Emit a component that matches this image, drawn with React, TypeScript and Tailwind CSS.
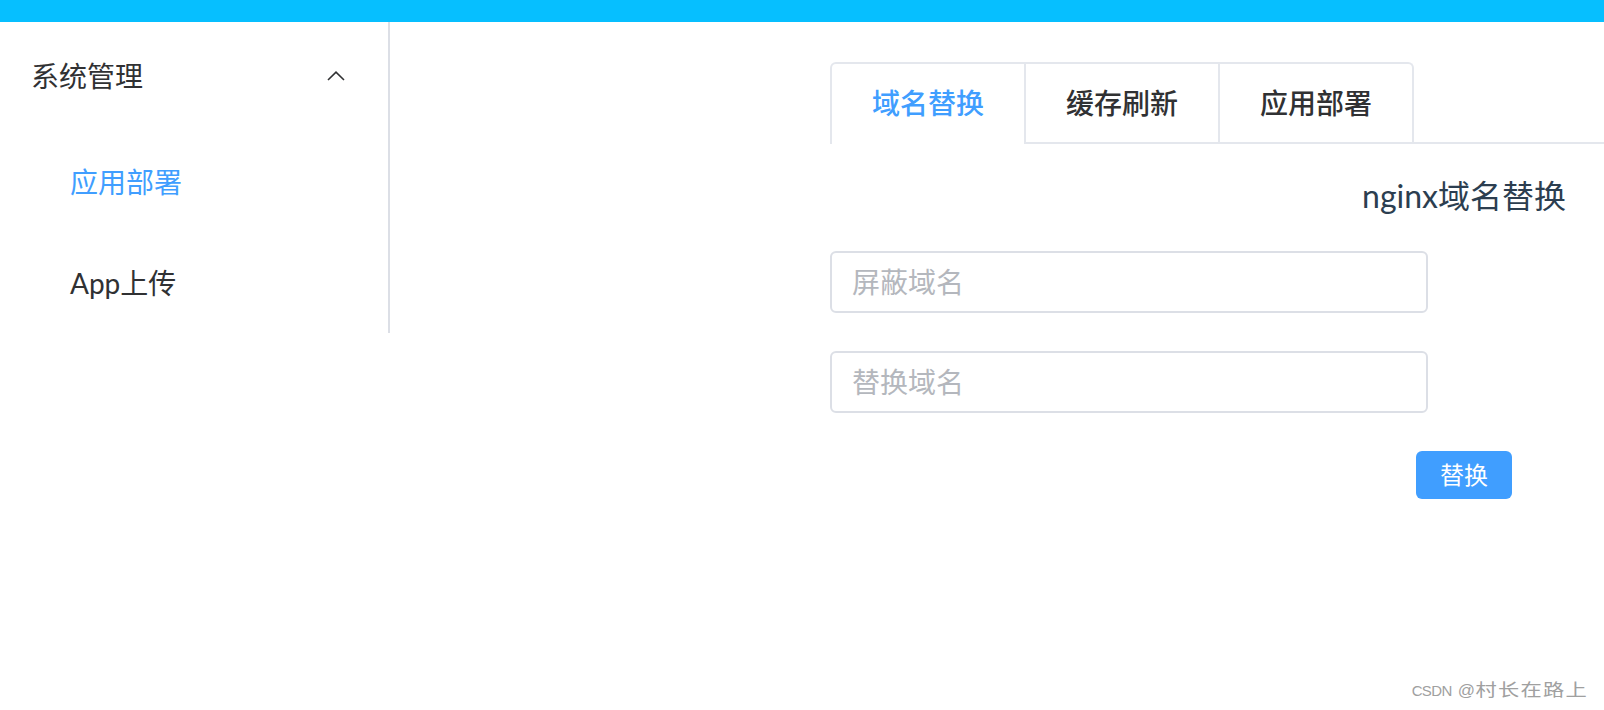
import React from "react";

const FONT = "font-['Lato','Noto_Sans_CJK_SC',sans-serif]";

function Chevron() {
  return (
    <svg width="18" height="10" viewBox="0 0 18 10" fill="none">
      <polyline points="1,9 9,1.2 17,9" stroke="#303133" strokeWidth="1.6" />
    </svg>
  );
}

export default function App() {
  const tabs = ["域名替换", "缓存刷新", "应用部署"];
  return (
    <div className={`relative w-[1604px] h-[710px] overflow-hidden bg-white ${FONT}`}>
      <div className="h-[22px] bg-[#06bfff]" />
      <div className="flex">
        <aside className="w-[390px] h-[311px] shrink-0 border-r-2 border-[#dcdfe6] flex flex-col">
          <div className="h-[108px] flex items-center justify-between pl-[31px] pr-[43px] text-[28px] leading-[40px] text-[#303133]">
            <span>系统管理</span>
            <Chevron />
          </div>
          <div className="h-[103px] flex items-center pl-[70px] text-[28px] leading-[40px] text-[#409eff]">
            应用部署
          </div>
          <div className="h-[100px] flex items-center pl-[70px] text-[28px] leading-[40px] text-[#303133]">
            App上传
          </div>
        </aside>
        <main className="flex-1 pl-[440px] pt-[40px]">
          <div className="flex border-b-2 border-[#e4e7ed]">
            <div className="flex -mb-[2px] border-t-2 border-l-2 border-r-2 border-[#e4e7ed] rounded-t-[6px]">
              {tabs.map((t, i) => (
                <div
                  key={t}
                  className={`${i === 0 ? "w-[192px] border-b-2 border-b-white text-[#409eff]" : "w-[194px] border-l-2 border-[#e4e7ed] border-b-2 text-[#303133]"} h-[80px] flex items-center justify-center text-[28px] font-medium`}
                >
                  {t}
                </div>
              ))}
            </div>
          </div>
          <div className="mt-[30px] pr-[38px] text-right text-[32px] leading-[44px] text-[#2c3e50]">
            nginx域名替换
          </div>
          <div className="mt-[33px] flex flex-col gap-[38px]">
            <input
              placeholder="屏蔽域名"
              className="w-[598px] h-[62px] border-2 border-[#dcdfe6] rounded-[6px] pl-[20px] text-[28px] outline-none placeholder:text-[#b4b7bd]"
            />
            <input
              placeholder="替换域名"
              className="w-[598px] h-[62px] border-2 border-[#dcdfe6] rounded-[6px] pl-[20px] text-[28px] outline-none placeholder:text-[#b4b7bd]"
            />
            <button className="ml-[586px] w-[96px] h-[48px] rounded-[6px] bg-[#409eff] text-white text-[24px] leading-none flex items-center justify-center">
              替换
            </button>
          </div>
        </main>
      </div>
      <div className="absolute right-[16px] bottom-[8px] flex items-baseline leading-[22px] text-[#a0a0a0] font-['Liberation_Sans','Noto_Sans_CJK_SC',sans-serif]">
        <span className="text-[15px] tracking-[-0.6px]">CSDN</span>
        <span className="text-[17px] ml-[6px] mr-[23px]">@</span>
        <span className="inline-block text-[17px] tracking-[1px] scale-x-[1.25] origin-right">村长在路上</span>
      </div>
    </div>
  );
}
